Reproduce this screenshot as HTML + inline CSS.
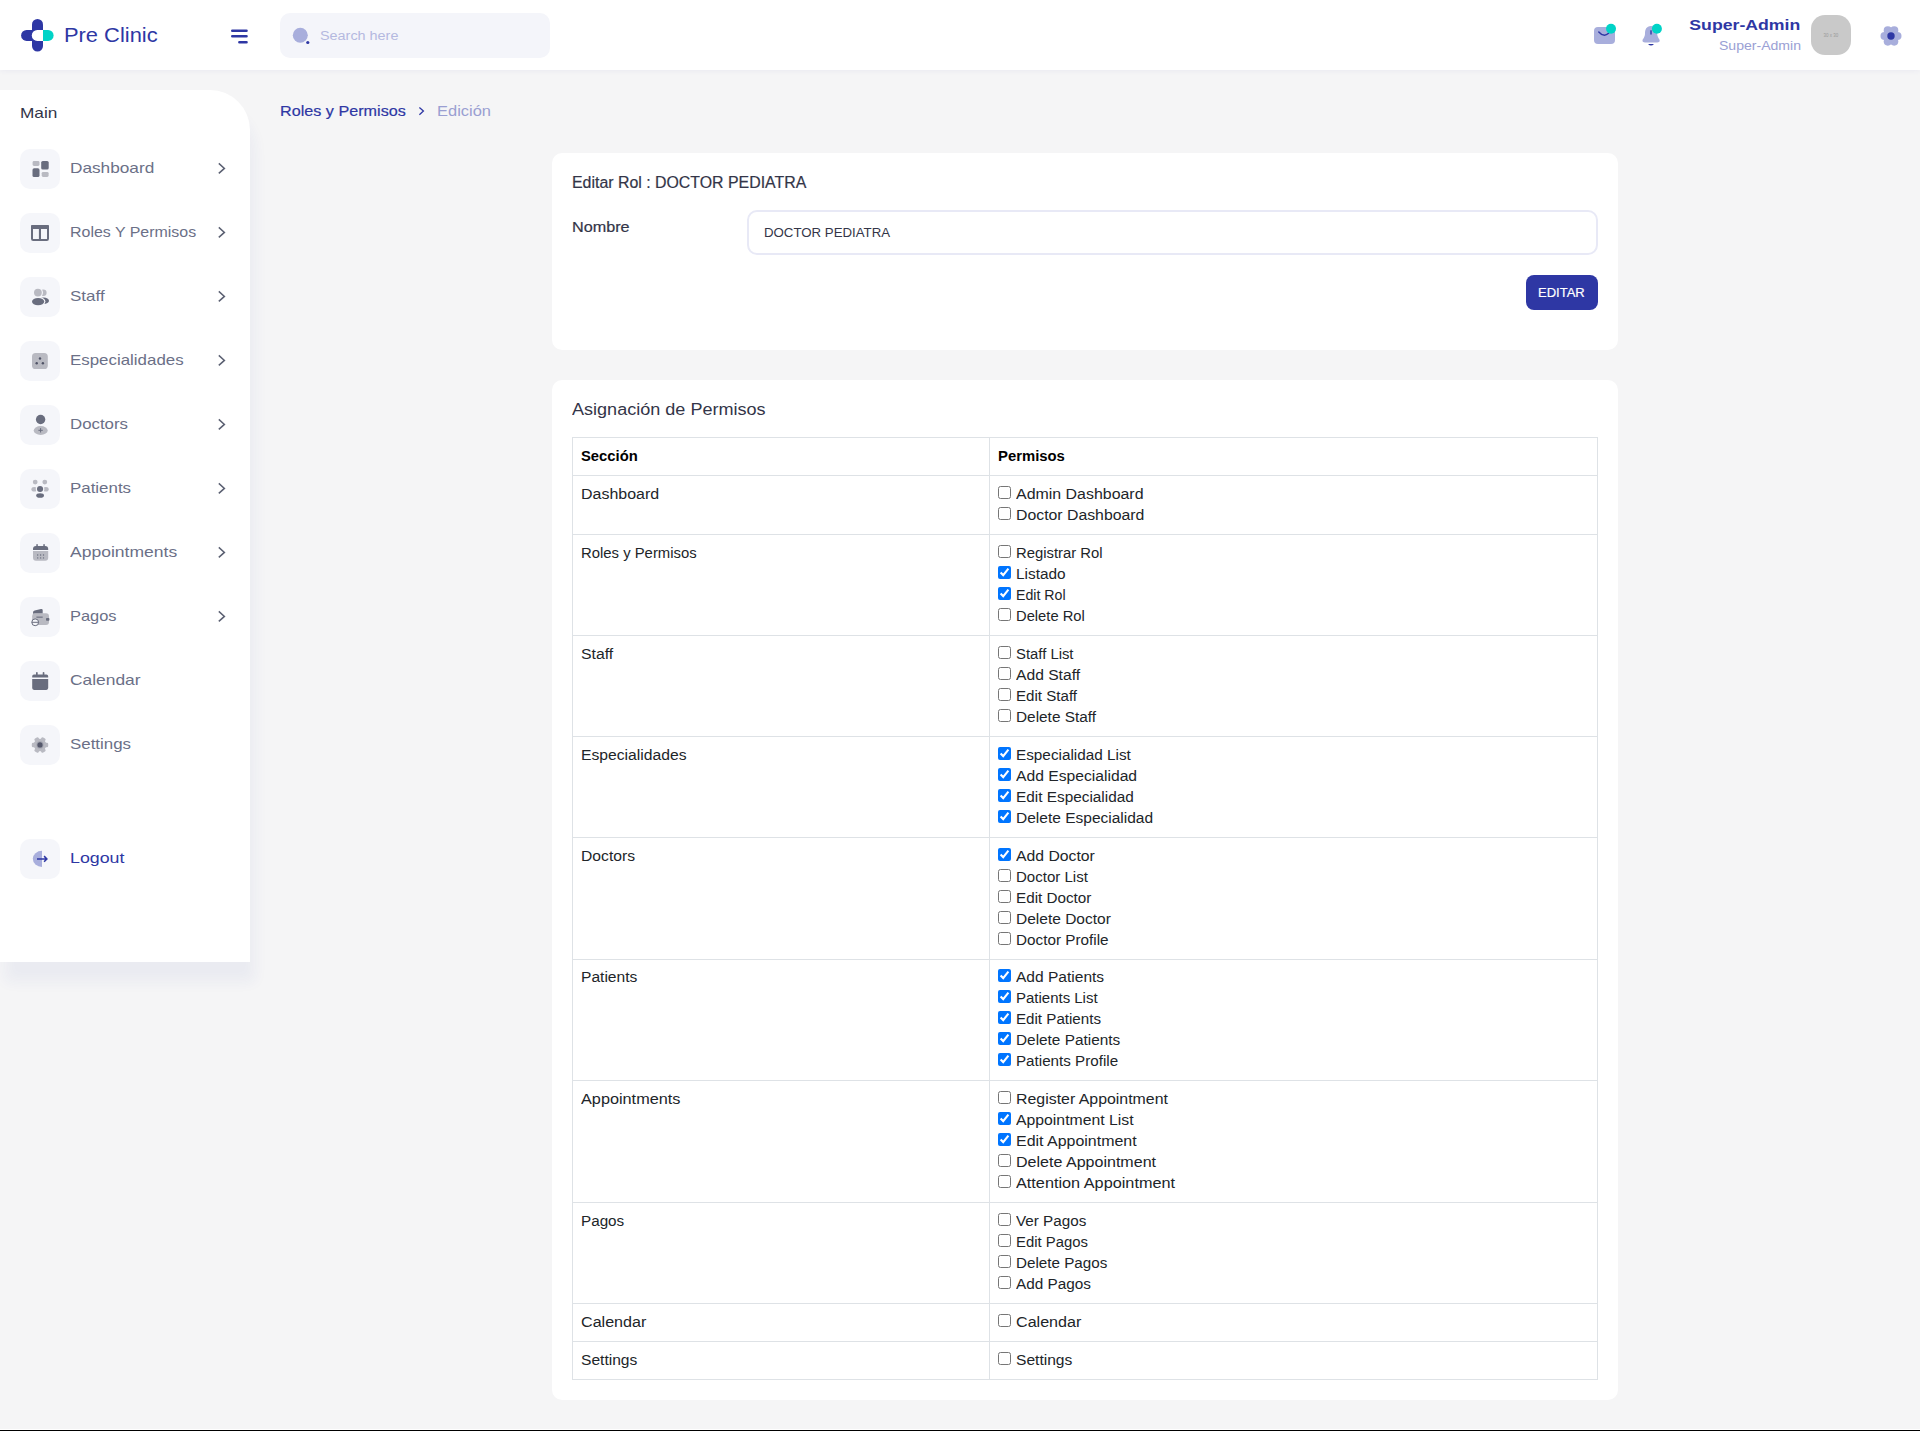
<!DOCTYPE html>
<html lang="es"><head><meta charset="utf-8"><title>Pre Clinic - Roles y Permisos</title>
<style>

*{box-sizing:border-box}
html,body{margin:0;padding:0}
body{width:1920px;height:1431px;overflow:hidden;position:relative;background:#f5f5f6;
 font-family:"Liberation Sans",sans-serif;font-size:14px;line-height:21px;color:#333548}
.abs{position:absolute;white-space:nowrap}
.header{position:absolute;left:0;top:0;width:1920px;height:70px;background:#fff;box-shadow:0 1px 5px rgba(46,55,164,.055);z-index:5}
.search{position:absolute;left:280px;top:13px;width:270px;height:45px;border-radius:10px;background:#f4f5fa}
.sidebar{position:absolute;left:0;top:90px;width:250px;height:872px;background:#fff;border-top-right-radius:40px;
 box-shadow:5px 20px 14px rgba(46,55,164,.05);z-index:4}
.ibox{position:absolute;left:20px;width:40px;height:40px;border-radius:10px;background:#f5f6fa}
.ibox svg{position:absolute;left:0;top:0}
.mi{position:absolute;left:70px;font-size:15px;line-height:20px;color:#6b7087;white-space:nowrap}
.chev{position:absolute;left:216px;width:12px;height:14px}
.card{position:absolute;left:552px;width:1066px;background:#fff;border-radius:10px}
.inp{position:absolute;left:747px;top:210px;width:851px;height:45px;border:2px solid #e8e9f6;border-radius:10px;background:#fff}
.btn{position:absolute;left:1526px;top:275px;width:72px;height:35px;border-radius:8px;background:#2e37a4;color:#fff;
 font-size:14px;line-height:35px;text-align:center;white-space:nowrap}
table.perm{position:absolute;left:572px;top:437px;width:1026px;border-collapse:collapse;table-layout:fixed;color:#212529;font-size:14px;line-height:21px}
table.perm td,table.perm th{border:1px solid #dee2e6;padding:7.5px 8px 8px 8px;vertical-align:top;text-align:left;white-space:nowrap}
table.perm th{font-weight:700;color:#000}
table.perm .l{display:block;height:21px;position:relative;padding-left:17.7px}
table.perm .l input{position:absolute;left:0;top:2.7px;margin:0;width:13px;height:13px}
.med{-webkit-text-stroke:.2px currentColor}
table.perm tr.sh td{padding-top:6.5px;padding-bottom:8px}

</style></head>
<body>
<div class="header">
<svg class="abs" style="left:15px;top:13px" width="48" height="44" viewBox="15 13 48 44">
 <rect x="32" y="19" width="11" height="32.6" rx="5.5" fill="#2e37a4"/>
 <rect x="21.1" y="29.9" width="24" height="11" rx="5.5" fill="#2e37a4"/>
 <path d="M43 29.9h5.1a5.5 5.5 0 0 1 0 11H43z" fill="#00d3c7"/>
 <path d="M43 29.9h-5.7a5.5 5.5 0 0 0 0 11H43z" fill="#fff"/>
</svg>
<div class="abs" style="left:63.8px;top:21px;font-size:20.5px;line-height:28px;color:#2e37a4"><span style="display:inline-block;transform:scaleX(1.067);transform-origin:0 50%">Pre Clinic</span></div>
<svg class="abs" style="left:228px;top:26px" width="24" height="22" viewBox="228 26 24 22">
 <g stroke="#2e37a4" stroke-width="2.6" stroke-linecap="round"><path d="M232.3 30.7H246.5M232.3 36.3H246.5M239.4 42.3H246.5"/></g>
</svg>
<div class="search">
 <svg class="abs" style="left:8px;top:10px" width="26" height="26" viewBox="288 23 26 26">
  <circle cx="300.3" cy="35.3" r="7.5" fill="#a8aedc"/><circle cx="307.8" cy="42.5" r="2.4" fill="#f4f5fa"/><circle cx="307.8" cy="42.5" r="1.6" fill="#2e37a4"/>
 </svg>
 <div class="abs" style="left:39.5px;top:14.6px;font-size:12px;line-height:16px;color:#b4b9e0"><span style="display:inline-block;transform:scaleX(1.199);transform-origin:0 50%">Search here</span></div>
</div>
<svg class="abs" style="left:1588px;top:20px" width="80" height="30" viewBox="1588 20 80 30">
 <rect x="1594" y="27" width="21" height="17" rx="4" fill="#a8aedc"/>
 <path d="M1598.8 32Q1603.8 37.6 1608.6 33.2" stroke="#2e37a4" stroke-width="1.5" fill="none" stroke-linecap="round"/>
 <circle cx="1611" cy="28.8" r="5" fill="#00d3c7"/>
 <path d="M1651 26C1646.3 26 1645 29.8 1645 33.6C1645 37.8 1642.5 38.8 1642.5 40.8C1642.5 42 1643.6 42.5 1645 42.5H1657.2C1658.6 42.5 1659.7 42 1659.7 40.8C1659.7 38.8 1657.2 37.8 1657.2 33.6C1657.2 29.8 1655.8 26 1651 26Z" fill="#a8aedc"/>
 <path d="M1648 44H1654Q1651 47.2 1648 44Z" fill="#2e37a4"/>
 <rect x="1650.3" y="30.3" width="1.4" height="4.2" fill="#2e37a4"/>
 <circle cx="1656.9" cy="28.8" r="5" fill="#00d3c7"/>
</svg>
<div class="abs" style="right:119.3px;top:15.4px;font-size:15.5px;line-height:20px;font-weight:700;color:#2e37a4"><span style="display:inline-block;transform:scaleX(1.141);transform-origin:100% 50%">Super-Admin</span></div>
<div class="abs" style="right:119.3px;top:38.6px;font-size:12px;line-height:14px;color:#9aa0d4"><span style="display:inline-block;transform:scaleX(1.172);transform-origin:100% 50%">Super-Admin</span></div>
<div class="abs" style="left:1811px;top:15px;width:40px;height:40px;border-radius:14px;background:#c9c9c9;text-align:center;font-size:4.5px;line-height:42px;color:#9a9a9a">30 x 30</div>
<svg class="abs" style="left:1877.6px;top:22.6px" width="26" height="26" viewBox="-13 -13 26 26">
 <g fill="#a8aedc"><circle r="7"/>
 <circle cx="6.4" cy="0" r="4.1"/><circle cx="3.2" cy="5.54" r="4.1"/><circle cx="-3.2" cy="5.54" r="4.1"/>
 <circle cx="-6.4" cy="0" r="4.1"/><circle cx="-3.2" cy="-5.54" r="4.1"/><circle cx="3.2" cy="-5.54" r="4.1"/></g>
 <circle r="3.7" fill="#2e37a4"/>
</svg>
</div>
<div class="sidebar">
<div class="abs" style="left:19.5px;top:13px;font-size:15px;line-height:20px;color:#333548"><span style="display:inline-block;transform:scaleX(1.148);transform-origin:0 50%">Main</span></div>
<div class="ibox" style="top:59px"><svg width="40" height="40" viewBox="0 0 40 40"><rect x="12.6" y="12" width="6.9" height="5" rx="1.4" fill="#b9bac2"/><rect x="21.2" y="12" width="7.5" height="8.5" rx="1.6" fill="#696d7e"/><rect x="12.5" y="19.3" width="7" height="8.7" rx="1.6" fill="#696d7e"/><rect x="21.7" y="22.9" width="6.9" height="5" rx="1.4" fill="#b9bac2"/></svg></div><div class="mi" style="top:68.3px"><span style="display:inline-block;transform:scaleX(1.148);transform-origin:0 50%">Dashboard</span></div><svg class="chev" style="top:71.4px" viewBox="0 0 12 14"><path d="M2.8 2.4L8.4 7.4L2.8 12.4" fill="none" stroke="#5b6072" stroke-width="1.5"/></svg>
<div class="ibox" style="top:123px"><svg width="40" height="40" viewBox="0 0 40 40"><rect x="12" y="13.1" width="16" height="13.9" rx="1.2" fill="none" stroke="#696d7e" stroke-width="2"/><rect x="11" y="12.1" width="18" height="3.8" rx="1" fill="#696d7e"/><rect x="18.9" y="15" width="2.1" height="12" fill="#696d7e"/></svg></div><div class="mi" style="top:132.3px"><span style="display:inline-block;transform:scaleX(1.063);transform-origin:0 50%">Roles Y Permisos</span></div><svg class="chev" style="top:135.4px" viewBox="0 0 12 14"><path d="M2.8 2.4L8.4 7.4L2.8 12.4" fill="none" stroke="#5b6072" stroke-width="1.5"/></svg>
<div class="ibox" style="top:187px"><svg width="40" height="40" viewBox="0 0 40 40"><circle cx="23.3" cy="15.8" r="3.3" fill="#b9bac2"/><circle cx="17.9" cy="15.6" r="5.1" fill="#f5f6fa"/><circle cx="17.9" cy="15.6" r="3.9" fill="#b9bac2"/><ellipse cx="23.6" cy="23.7" rx="5.4" ry="3.1" fill="#696d7e"/><ellipse cx="18.1" cy="24.6" rx="7.3" ry="4.7" fill="#f5f6fa"/><ellipse cx="18.1" cy="24.6" rx="6.1" ry="3.6" fill="#696d7e"/></svg></div><div class="mi" style="top:196.3px"><span style="display:inline-block;transform:scaleX(1.132);transform-origin:0 50%">Staff</span></div><svg class="chev" style="top:199.4px" viewBox="0 0 12 14"><path d="M2.8 2.4L8.4 7.4L2.8 12.4" fill="none" stroke="#5b6072" stroke-width="1.5"/></svg>
<div class="ibox" style="top:251px"><svg width="40" height="40" viewBox="0 0 40 40"><rect x="12" y="11.9" width="15.8" height="16.1" rx="3.6" fill="#b9bac2"/><g fill="#4f5266"><circle cx="20" cy="17.5" r="1.2"/><circle cx="16.7" cy="22.3" r="1.2"/><circle cx="22.9" cy="22.3" r="1.2"/></g></svg></div><div class="mi" style="top:260.3px"><span style="display:inline-block;transform:scaleX(1.126);transform-origin:0 50%">Especialidades</span></div><svg class="chev" style="top:263.4px" viewBox="0 0 12 14"><path d="M2.8 2.4L8.4 7.4L2.8 12.4" fill="none" stroke="#5b6072" stroke-width="1.5"/></svg>
<div class="ibox" style="top:315px"><svg width="40" height="40" viewBox="0 0 40 40"><circle cx="20.6" cy="14.5" r="4.7" fill="#696d7e"/><ellipse cx="20.7" cy="25.5" rx="7" ry="4.4" fill="#b9bac2"/><path d="M18.4 25.3h4.4M20.6 23.1v4.4" stroke="#696d7e" stroke-width="1"/></svg></div><div class="mi" style="top:324.3px"><span style="display:inline-block;transform:scaleX(1.122);transform-origin:0 50%">Doctors</span></div><svg class="chev" style="top:327.4px" viewBox="0 0 12 14"><path d="M2.8 2.4L8.4 7.4L2.8 12.4" fill="none" stroke="#5b6072" stroke-width="1.5"/></svg>
<div class="ibox" style="top:379px"><svg width="40" height="40" viewBox="0 0 40 40"><g fill="#b9bac2"><circle cx="15.2" cy="13.1" r="2.4"/><circle cx="24.8" cy="13.1" r="2.4"/><ellipse cx="14.2" cy="20.2" rx="2.8" ry="2.3"/><ellipse cx="25.9" cy="20.2" rx="2.8" ry="2.3"/></g><circle cx="20.05" cy="20" r="4.3" fill="#f5f6fa"/><circle cx="20.05" cy="20" r="3.05" fill="#696d7e"/><ellipse cx="20.1" cy="26.5" rx="3.9" ry="2.3" fill="#696d7e"/></svg></div><div class="mi" style="top:388.3px"><span style="display:inline-block;transform:scaleX(1.126);transform-origin:0 50%">Patients</span></div><svg class="chev" style="top:391.4px" viewBox="0 0 12 14"><path d="M2.8 2.4L8.4 7.4L2.8 12.4" fill="none" stroke="#5b6072" stroke-width="1.5"/></svg>
<div class="ibox" style="top:443px"><svg width="40" height="40" viewBox="0 0 40 40"><path d="M13 16.9V16a3 3 0 0 1 3-3h9.2a3 3 0 0 1 3 3v.9z" fill="#696d7e"/><rect x="16.3" y="11" width="1.5" height="3" rx=".7" fill="#696d7e"/><rect x="23.3" y="11" width="1.5" height="3" rx=".7" fill="#696d7e"/><path d="M13 18h15.2v6.8a3 3 0 0 1-3 3H16a3 3 0 0 1-3-3z" fill="#b9bac2"/><g fill="#696d7e"><circle cx="17.7" cy="22" r=".7"/><circle cx="20.6" cy="22" r=".7"/><circle cx="23.5" cy="22" r=".7"/><circle cx="17.7" cy="24.9" r=".7"/><circle cx="20.6" cy="24.9" r=".7"/><circle cx="23.5" cy="24.9" r=".7"/></g></svg></div><div class="mi" style="top:452.3px"><span style="display:inline-block;transform:scaleX(1.169);transform-origin:0 50%">Appointments</span></div><svg class="chev" style="top:455.4px" viewBox="0 0 12 14"><path d="M2.8 2.4L8.4 7.4L2.8 12.4" fill="none" stroke="#5b6072" stroke-width="1.5"/></svg>
<div class="ibox" style="top:507px"><svg width="40" height="40" viewBox="0 0 40 40"><path d="M13 16.8v-1.2q0-1.6 1.6-2.1l6.4-1.5q1.7-.3 1.7 1.2v3.6z" fill="#696d7e"/><rect x="12.2" y="16.2" width="16.8" height="11.8" rx="3" fill="#b9bac2"/><rect x="16.4" y="19.6" width="6.3" height="1.1" fill="#696d7e"/><rect x="26" y="21" width="3.4" height="2.8" rx=".8" fill="#696d7e"/><circle cx="15.2" cy="25.3" r="3.4" fill="#f5f6fa" stroke="#696d7e" stroke-width="1"/><path d="M11.8 25.3h6.8" stroke="#696d7e" stroke-width="1"/></svg></div><div class="mi" style="top:516.3px"><span style="display:inline-block;transform:scaleX(1.095);transform-origin:0 50%">Pagos</span></div><svg class="chev" style="top:519.4px" viewBox="0 0 12 14"><path d="M2.8 2.4L8.4 7.4L2.8 12.4" fill="none" stroke="#5b6072" stroke-width="1.5"/></svg>
<div class="ibox" style="top:571px"><svg width="40" height="40" viewBox="0 0 40 40"><path d="M12.2 16.5v-1.2a1.8 1.8 0 0 1 1.8-1.8h12.4a1.8 1.8 0 0 1 1.8 1.8v1.2z" fill="#696d7e"/><rect x="16" y="11" width="1.7" height="3.4" rx=".8" fill="#696d7e"/><rect x="22.7" y="11" width="1.7" height="3.4" rx=".8" fill="#696d7e"/><path d="M12.2 18h16v9.1a1.8 1.8 0 0 1-1.8 1.8H14a1.8 1.8 0 0 1-1.8-1.8z" fill="#696d7e"/></svg></div><div class="mi" style="top:580.3px"><span style="display:inline-block;transform:scaleX(1.159);transform-origin:0 50%">Calendar</span></div>
<div class="ibox" style="top:635px"><svg width="40" height="40" viewBox="0 0 40 40"><g transform="translate(20 20)" fill="#b9bac2"><circle r="6.3"/><rect x="-2.3" y="-8.2" width="4.6" height="5" rx="1.3" transform="rotate(30)"/><rect x="-2.3" y="-8.2" width="4.6" height="5" rx="1.3" transform="rotate(90)"/><rect x="-2.3" y="-8.2" width="4.6" height="5" rx="1.3" transform="rotate(150)"/><rect x="-2.3" y="-8.2" width="4.6" height="5" rx="1.3" transform="rotate(210)"/><rect x="-2.3" y="-8.2" width="4.6" height="5" rx="1.3" transform="rotate(270)"/><rect x="-2.3" y="-8.2" width="4.6" height="5" rx="1.3" transform="rotate(330)"/></g><circle cx="20" cy="19.9" r="3.6" fill="#a3a5b0"/><circle cx="20" cy="19.9" r="2.6" fill="#55586b"/></svg></div><div class="mi" style="top:644.3px"><span style="display:inline-block;transform:scaleX(1.126);transform-origin:0 50%">Settings</span></div>
<div class="ibox" style="top:749px"><svg width="40" height="40" viewBox="0 0 40 40"><path d="M22 11.8A9.2 8.05 0 0 0 22 27.9z" fill="#a8aedc"/><path d="M17 19.9h9.6M24.1 17.1l2.8 2.8-2.8 2.8" stroke="#2e37a4" stroke-width="1.5" fill="none"/></svg></div><div class="mi" style="top:758.3px;color:#2e37a4"><span style="display:inline-block;transform:scaleX(1.187);transform-origin:0 50%">Logout</span></div>
</div>
<div class="abs med" style="left:280px;top:100.5px;font-size:15px;line-height:20px;color:#2e37a4"><span style="display:inline-block;transform:scaleX(1.078);transform-origin:0 50%">Roles y Permisos</span></div>
<svg class="abs" style="left:415px;top:104px" width="12" height="14" viewBox="415 104 12 14"><path d="M419.4 107.5L423.4 111.1L419.4 114.7" fill="none" stroke="#2e37a4" stroke-width="1.3"/></svg>
<div class="abs" style="left:437px;top:100.5px;font-size:15px;line-height:20px;color:#9a9fd2"><span style="display:inline-block;transform:scaleX(1.097);transform-origin:0 50%">Edición</span></div>
<div class="card" style="top:153px;height:197px"></div>
<div class="abs med" style="left:572.2px;top:171.5px;font-size:16px;line-height:22px;color:#333548"><span style="display:inline-block;transform:scaleX(0.993);transform-origin:0 50%">Editar Rol : DOCTOR PEDIATRA</span></div>
<div class="abs med" style="left:572.2px;top:216.8px;font-size:14px;line-height:21px;color:#333548"><span style="display:inline-block;transform:scaleX(1.156);transform-origin:0 50%">Nombre</span></div>
<div class="inp"></div>
<div class="abs" style="left:764px;top:221.7px;font-size:13.5px;line-height:21px;color:#333548"><span style="display:inline-block;transform:scaleX(0.981);transform-origin:0 50%">DOCTOR PEDIATRA</span></div>
<div class="btn med" style="font-size:13.5px"><span style="display:inline-block;transform:scaleX(0.964);transform-origin:0 50%">EDITAR</span></div>
<div class="card" style="top:380px;height:1020px"></div>
<div class="abs" style="left:572.3px;top:399.1px;font-size:16px;line-height:22px;color:#333548"><span style="display:inline-block;transform:scaleX(1.128);transform-origin:0 50%">Asignación de Permisos</span></div>
<table class="perm"><colgroup><col style="width:417px"><col></colgroup><thead><tr style="height:38px"><th><span style="display:inline-block;transform:scaleX(1.056);transform-origin:0 50%">Sección</span></th><th><span style="display:inline-block;transform:scaleX(1.061);transform-origin:0 50%">Permisos</span></th></tr></thead><tbody>
<tr style="height:59px"><td><span style="display:inline-block;transform:scaleX(1.140);transform-origin:0 50%">Dashboard</span></td><td><label class="l"><input type="checkbox"><span style="display:inline-block;transform:scaleX(1.138);transform-origin:0 50%">Admin Dashboard</span></label><label class="l"><input type="checkbox"><span style="display:inline-block;transform:scaleX(1.130);transform-origin:0 50%">Doctor Dashboard</span></label></td></tr>
<tr style="height:101px"><td><span style="display:inline-block;transform:scaleX(1.062);transform-origin:0 50%">Roles y Permisos</span></td><td><label class="l"><input type="checkbox"><span style="display:inline-block;transform:scaleX(1.060);transform-origin:0 50%">Registrar Rol</span></label><label class="l"><input type="checkbox" checked><span style="display:inline-block;transform:scaleX(1.099);transform-origin:0 50%">Listado</span></label><label class="l"><input type="checkbox" checked><span style="display:inline-block;transform:scaleX(1.011);transform-origin:0 50%">Edit Rol</span></label><label class="l"><input type="checkbox"><span style="display:inline-block;transform:scaleX(1.052);transform-origin:0 50%">Delete Rol</span></label></td></tr>
<tr style="height:101px"><td><span style="display:inline-block;transform:scaleX(1.130);transform-origin:0 50%">Staff</span></td><td><label class="l"><input type="checkbox"><span style="display:inline-block;transform:scaleX(1.060);transform-origin:0 50%">Staff List</span></label><label class="l"><input type="checkbox"><span style="display:inline-block;transform:scaleX(1.117);transform-origin:0 50%">Add Staff</span></label><label class="l"><input type="checkbox"><span style="display:inline-block;transform:scaleX(1.079);transform-origin:0 50%">Edit Staff</span></label><label class="l"><input type="checkbox"><span style="display:inline-block;transform:scaleX(1.098);transform-origin:0 50%">Delete Staff</span></label></td></tr>
<tr style="height:101px"><td><span style="display:inline-block;transform:scaleX(1.120);transform-origin:0 50%">Especialidades</span></td><td><label class="l"><input type="checkbox" checked><span style="display:inline-block;transform:scaleX(1.093);transform-origin:0 50%">Especialidad List</span></label><label class="l"><input type="checkbox" checked><span style="display:inline-block;transform:scaleX(1.119);transform-origin:0 50%">Add Especialidad</span></label><label class="l"><input type="checkbox" checked><span style="display:inline-block;transform:scaleX(1.097);transform-origin:0 50%">Edit Especialidad</span></label><label class="l"><input type="checkbox" checked><span style="display:inline-block;transform:scaleX(1.108);transform-origin:0 50%">Delete Especialidad</span></label></td></tr>
<tr style="height:122px"><td><span style="display:inline-block;transform:scaleX(1.120);transform-origin:0 50%">Doctors</span></td><td><label class="l"><input type="checkbox" checked><span style="display:inline-block;transform:scaleX(1.126);transform-origin:0 50%">Add Doctor</span></label><label class="l"><input type="checkbox"><span style="display:inline-block;transform:scaleX(1.074);transform-origin:0 50%">Doctor List</span></label><label class="l"><input type="checkbox"><span style="display:inline-block;transform:scaleX(1.089);transform-origin:0 50%">Edit Doctor</span></label><label class="l"><input type="checkbox"><span style="display:inline-block;transform:scaleX(1.108);transform-origin:0 50%">Delete Doctor</span></label><label class="l"><input type="checkbox"><span style="display:inline-block;transform:scaleX(1.091);transform-origin:0 50%">Doctor Profile</span></label></td></tr>
<tr class="sh" style="height:121px"><td><span style="display:inline-block;transform:scaleX(1.113);transform-origin:0 50%">Patients</span></td><td><label class="l"><input type="checkbox" checked><span style="display:inline-block;transform:scaleX(1.110);transform-origin:0 50%">Add Patients</span></label><label class="l"><input type="checkbox" checked><span style="display:inline-block;transform:scaleX(1.070);transform-origin:0 50%">Patients List</span></label><label class="l"><input type="checkbox" checked><span style="display:inline-block;transform:scaleX(1.081);transform-origin:0 50%">Edit Patients</span></label><label class="l"><input type="checkbox" checked><span style="display:inline-block;transform:scaleX(1.097);transform-origin:0 50%">Delete Patients</span></label><label class="l"><input type="checkbox" checked><span style="display:inline-block;transform:scaleX(1.084);transform-origin:0 50%">Patients Profile</span></label></td></tr>
<tr style="height:122px"><td><span style="display:inline-block;transform:scaleX(1.161);transform-origin:0 50%">Appointments</span></td><td><label class="l"><input type="checkbox"><span style="display:inline-block;transform:scaleX(1.135);transform-origin:0 50%">Register Appointment</span></label><label class="l"><input type="checkbox" checked><span style="display:inline-block;transform:scaleX(1.127);transform-origin:0 50%">Appointment List</span></label><label class="l"><input type="checkbox" checked><span style="display:inline-block;transform:scaleX(1.140);transform-origin:0 50%">Edit Appointment</span></label><label class="l"><input type="checkbox"><span style="display:inline-block;transform:scaleX(1.146);transform-origin:0 50%">Delete Appointment</span></label><label class="l"><input type="checkbox"><span style="display:inline-block;transform:scaleX(1.161);transform-origin:0 50%">Attention Appointment</span></label></td></tr>
<tr style="height:101px"><td><span style="display:inline-block;transform:scaleX(1.088);transform-origin:0 50%">Pagos</span></td><td><label class="l"><input type="checkbox"><span style="display:inline-block;transform:scaleX(1.088);transform-origin:0 50%">Ver Pagos</span></label><label class="l"><input type="checkbox"><span style="display:inline-block;transform:scaleX(1.062);transform-origin:0 50%">Edit Pagos</span></label><label class="l"><input type="checkbox"><span style="display:inline-block;transform:scaleX(1.086);transform-origin:0 50%">Delete Pagos</span></label><label class="l"><input type="checkbox"><span style="display:inline-block;transform:scaleX(1.095);transform-origin:0 50%">Add Pagos</span></label></td></tr>
<tr style="height:38px"><td><span style="display:inline-block;transform:scaleX(1.150);transform-origin:0 50%">Calendar</span></td><td><label class="l"><input type="checkbox"><span style="display:inline-block;transform:scaleX(1.150);transform-origin:0 50%">Calendar</span></label></td></tr>
<tr style="height:38px"><td><span style="display:inline-block;transform:scaleX(1.113);transform-origin:0 50%">Settings</span></td><td><label class="l"><input type="checkbox"><span style="display:inline-block;transform:scaleX(1.113);transform-origin:0 50%">Settings</span></label></td></tr>
</tbody></table>
<div class="abs" style="left:0;top:1429px;width:1920px;height:1px;background:#fff"></div>
<div class="abs" style="left:0;top:1430px;width:1920px;height:1px;background:#000"></div>
</body></html>
